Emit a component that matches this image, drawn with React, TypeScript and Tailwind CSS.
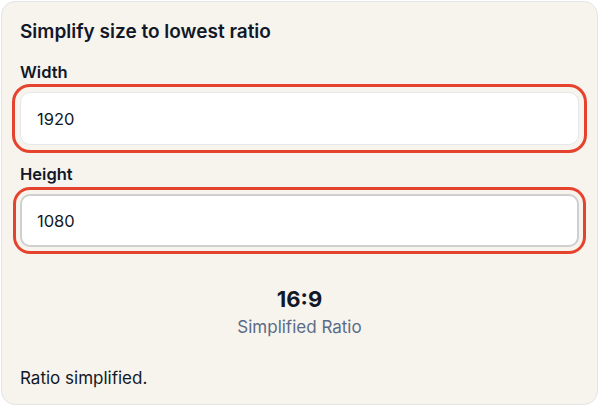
import { useState } from 'react';

function gcd(a: number, b: number): number {
  return b === 0 ? a : gcd(b, a % b);
}

export default function App() {
  const [width, setWidth] = useState('1920');
  const [height, setHeight] = useState('1080');

  const w = parseInt(width, 10);
  const h = parseInt(height, 10);
  const ok = w > 0 && h > 0;
  const g = ok ? gcd(w, h) : 1;
  const ratio = ok ? `${w / g}:${h / g}` : '—';

  return (
    <div className="p-px" style={{ fontFamily: 'Inter, "Noto Sans", sans-serif' }}>
      <div className="w-[597px] h-[404px] bg-[#f7f4ee] border border-[#e4e4e7] rounded-[14px] px-[18px] pt-[16px] text-[#111827]">
        <h2 className="text-[19px] leading-7 font-semibold">Simplify size to lowest ratio</h2>

        <label className="block mt-[14px] text-[16.5px] leading-6 font-semibold">Width</label>
        <input
          value={width}
          onChange={(e) => setWidth(e.target.value)}
          className="mt-2 block w-full h-[53px] rounded-[10px] bg-white border border-[#e5e7eb] px-4 text-[16.5px] outline-none ring-[3px] ring-[#e5432d] ring-offset-[5px] ring-offset-[#f7f4ee]"
        />

        <label className="block mt-[17px] text-[16.5px] leading-6 font-semibold">Height</label>
        <input
          value={height}
          onChange={(e) => setHeight(e.target.value)}
          className="mt-2 block w-full h-[53px] rounded-[10px] bg-white border-2 border-[#cfcfcf] px-[15px] text-[16.5px] outline-none ring-[3px] ring-[#e5432d] ring-offset-[4px] ring-offset-[#f7f4ee]"
        />

        <div className="mt-[38px] flex flex-col items-center">
          <span className="text-[22px] leading-7 font-bold">{ratio}</span>
          <span className="mt-[2px] text-[17px] leading-6 text-[#5b6b87]">Simplified Ratio</span>
        </div>

        <p className="mt-[27px] text-[17px] leading-6">{ok ? 'Ratio simplified.' : 'Enter valid sizes.'}</p>
      </div>
    </div>
  );
}
